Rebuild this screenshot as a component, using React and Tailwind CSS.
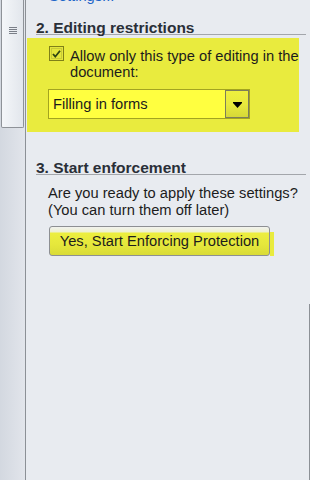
export default function App() {
  const font = { fontFamily: '"Liberation Sans", Arial, sans-serif' };
  return (
    <div className="w-[310px] h-[480px] flex overflow-hidden bg-[#e8ebf0] text-[#1c1c1c]" style={font}>
      {/* left scrollbar strip */}
      <div className="w-[26px] h-full flex flex-col border-r border-[#8c9096] bg-gradient-to-r from-[#d3d8e0] to-[#e2e5eb]">
        <div className="ml-[1px] w-[23px] h-[128px] border border-t-0 border-[#8e9298] rounded-b-[2px] bg-gradient-to-r from-[#f4f6f9] to-[#e2e6ec] flex flex-col items-center pt-[27px] gap-[1px]">
          <div className="w-[8px] h-[1px] bg-[#7a7f88]" />
          <div className="w-[8px] h-[1px] bg-[#7a7f88]" />
          <div className="w-[8px] h-[1px] bg-[#7a7f88]" />
          <div className="w-[8px] h-[1px] bg-[#7a7f88]" />
        </div>
      </div>

      {/* main */}
      <div className="flex-1 flex flex-col">
        <div className="h-[4px] overflow-hidden pl-[23px]">
          <div className="text-[14.7px] leading-[16px] mt-[-12px] text-[#1e66c8]">Settings...</div>
        </div>

        <div className="mt-[17px] ml-[10px] mr-[4px] border-b border-[#a3a6ab]">
          <div className="text-[15.5px] leading-[13px] font-bold text-[#2a2f38]">2. Editing restrictions</div>
        </div>

        <div className="mt-[3px] ml-[1px] w-[272px] h-[94px] bg-[#e9eb3e] flex flex-col pl-[22px] pt-[10px]">
          <div className="flex items-start gap-[6px]">
            <div className="mt-[-2px] w-[15px] h-[15px] shrink-0 border border-[#7f8018] bg-[#e4e63c] p-[1px]">
              <div className="w-full h-full border border-[#c9cb36] flex items-center justify-center">
                <svg width="11" height="10" viewBox="0 0 11 10">
                  <path d="M1.2 5 L4 8.3 L9.8 1" fill="none" stroke="#2f4412" strokeWidth="2.2" />
                </svg>
              </div>
            </div>
            <div className="text-[14.7px] leading-[16px] whitespace-nowrap">
              Allow only this type of editing in the
              <br />
              document:
            </div>
          </div>
          <div className="mt-[9px] ml-[-1px] flex w-[202px] h-[30px] border border-[#a3a420] bg-[#ffff40]">
            <div className="flex-1 flex items-center pl-[4px] text-[14.7px] leading-[16px]">Filling in forms</div>
            <div className="w-[24px] h-full border border-[#7d7e5a] bg-gradient-to-b from-[#eef03e] via-[#e8ea3d] to-[#d6d838] flex items-center justify-center pt-[1px]">
              <svg width="9" height="6" viewBox="0 0 9 6">
                <path d="M0 0 L9 0 L9 1 L4.5 6 L0 1 Z" fill="#000" />
              </svg>
            </div>
          </div>
        </div>

        <div className="mt-[29px] ml-[10px] mr-[4px] border-b border-[#a3a6ab]">
          <div className="text-[15.5px] leading-[13px] font-bold text-[#2a2f38]">3. Start enforcement</div>
        </div>

        <div className="ml-[22px] mt-[10px] text-[14.7px] leading-[17px] whitespace-nowrap">
          <div>Are you ready to apply these settings?</div>
          <div>(You can turn them off later)</div>
        </div>

        <div className="ml-[23px] mt-[7px] flex">
          <div className="w-[221px] h-[30px] rounded-[3px] border border-[#8d8f93] bg-[linear-gradient(to_bottom,#f1f2ee_0px,#eef0d0_5px,#ecee3f_6px,#e6e83c_60%,#d9db37_100%)] flex items-center justify-center text-[14.7px] leading-[16px]">
            Yes, Start Enforcing Protection
          </div>
          <div className="mt-[6px] w-[4px] h-[24px] bg-[#e9eb3e]" />
        </div>

        <div className="mt-[48px] flex-1 border-r border-[#8c9096]" />
      </div>
    </div>
  );
}
